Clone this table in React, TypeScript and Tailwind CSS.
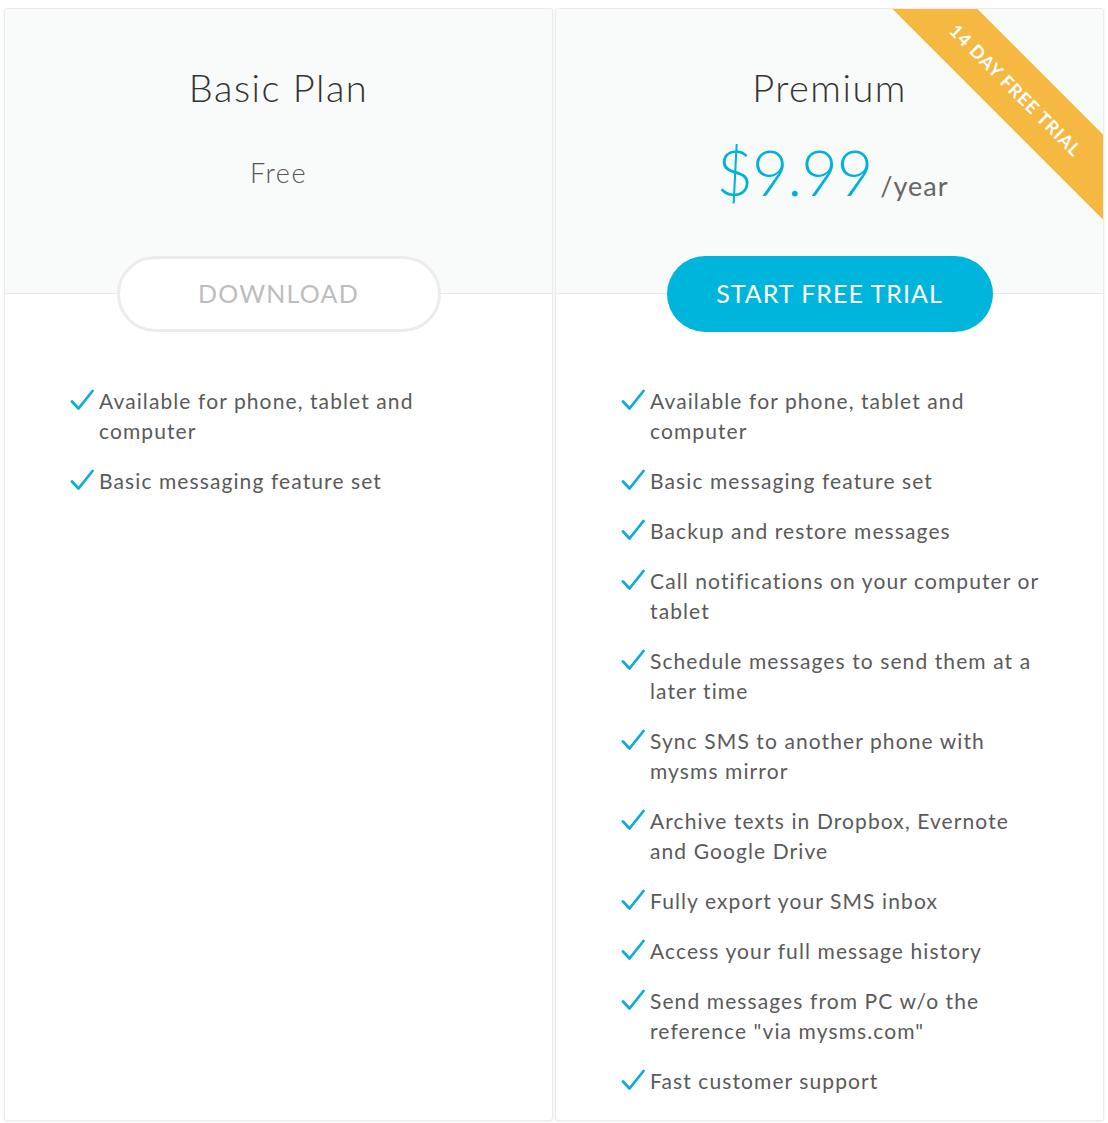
import React from 'react';

interface Plan {
  name: string;
  price: React.ReactNode;
  cta: string;
  primary: boolean;
  features: string[];
  ribbon?: string;
}

const plans: Plan[] = [
  {
    name: 'Basic Plan',
    price: <span className="text-[27px] font-light tracking-[1.5px] text-[#555]">Free</span>,
    cta: 'DOWNLOAD',
    primary: false,
    features: ['Available for phone, tablet and computer', 'Basic messaging feature set'],
  },
  {
    name: 'Premium',
    price: (
      <span className="flex items-baseline gap-[8px] pl-[6px]">
        <span className="text-[63px] leading-none font-light tracking-[-1px] text-[#00b2d9]">$9.99</span>
        <span className="text-[27px] tracking-[1px] text-[#666]">/year</span>
      </span>
    ),
    cta: 'START FREE TRIAL',
    primary: true,
    ribbon: '14 DAY FREE TRIAL',
    features: [
      'Available for phone, tablet and computer',
      'Basic messaging feature set',
      'Backup and restore messages',
      'Call notifications on your computer or tablet',
      'Schedule messages to send them at a later time',
      'Sync SMS to another phone with mysms mirror',
      'Archive texts in Dropbox, Evernote and Google Drive',
      'Fully export your SMS inbox',
      'Access your full message history',
      'Send messages from PC w/o the reference "via mysms.com"',
      'Fast customer support',
    ],
  },
];

const Check = () => (
  <svg width="24" height="22" viewBox="0 0 24 22" className="shrink-0 mt-[3px]">
    <path d="M2 12.5 L8.5 19.5 L22.5 2" fill="none" stroke="#10acd8" strokeWidth="2.8" strokeLinecap="round" strokeLinejoin="round" />
  </svg>
);

const PlanCard: React.FC<{ plan: Plan }> = ({ plan }) => (
  <div className="relative flex flex-col overflow-hidden rounded-[3px] border border-[#ebebeb] bg-white shadow-[0_1px_3px_rgba(0,0,0,0.06)]">
    {plan.ribbon && (
      <div className="absolute left-[290px] top-[51px] flex h-[60px] w-[340px] rotate-45 items-center justify-center bg-[#f5b841] text-[18px] font-bold tracking-[1px] text-white">
        {plan.ribbon}
      </div>
    )}
    <div className="flex h-[285px] flex-col items-center border-b border-[#e9eaea] bg-[#f9fafa] pt-[56px]">
      <h2 className="text-[38px] font-light leading-[44px] tracking-[1.5px] text-[#333]">{plan.name}</h2>
      <div className="mt-[28px] flex h-[72px] items-center justify-center">{plan.price}</div>
    </div>
    <div className="relative -mt-[38px] flex justify-center">
      {plan.primary ? (
        <button className="h-[76px] w-[326px] rounded-full bg-[#00b5dc] text-[25px] tracking-[1px] text-white">{plan.cta}</button>
      ) : (
        <button className="h-[76px] w-[324px] rounded-full border-[3px] border-[#ececec] bg-white text-[25px] tracking-[1.2px] text-[#bdbdbd]">
          {plan.cta}
        </button>
      )}
    </div>
    <ul className="flex flex-col gap-[20px] pb-[24px] pl-[65px] pr-[58px] pt-[54px]">
      {plan.features.map((f) => (
        <li key={f} className="flex gap-[5px] text-[21px] leading-[30px] tracking-[1.1px] text-[#5a5a5a]">
          <Check />
          <span>{f}</span>
        </li>
      ))}
    </ul>
  </div>
);

export default function App() {
  return (
    <div className="min-h-screen bg-white px-[4px] pb-[3px] pt-[8px] font-['Lato',sans-serif]">
      <div className="grid grid-cols-2 gap-[2px]">
        {plans.map((p) => (
          <PlanCard key={p.name} plan={p} />
        ))}
      </div>
    </div>
  );
}
